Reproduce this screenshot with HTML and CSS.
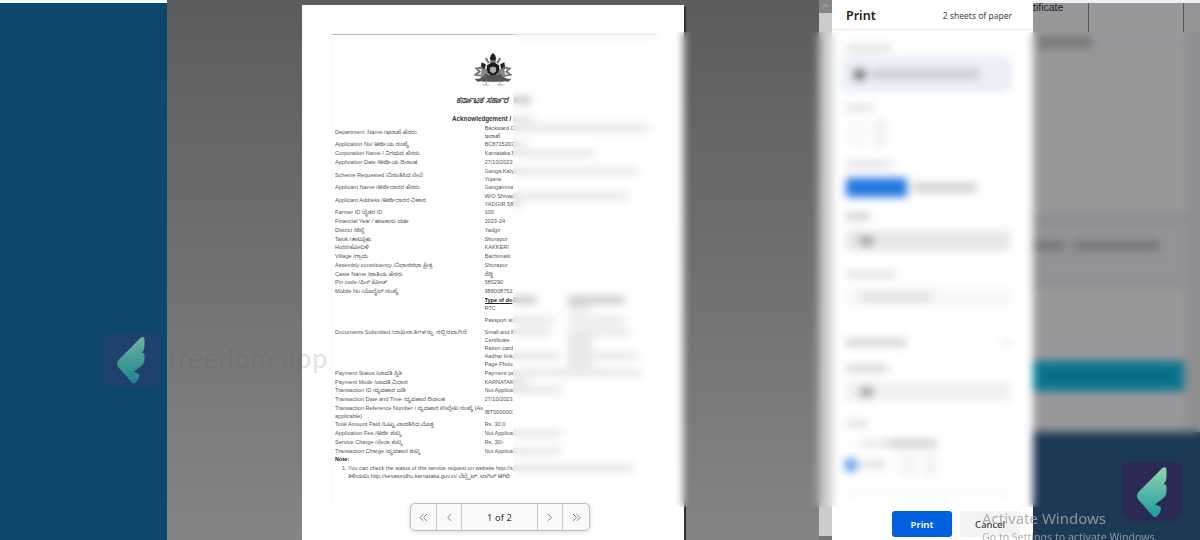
FILE: index.html
```html
<!DOCTYPE html>
<html lang="en">
<head>
<meta charset="utf-8">
<title>Print</title>
<link rel="stylesheet" href="styles.css">
</head>
<body>
<svg class="defs" width="0" height="0" aria-hidden="true">
  <defs>
    <linearGradient id="leaf" x1="0" y1="0" x2="0" y2="1"><stop offset="0" stop-color="#8fd6a8"/><stop offset="1" stop-color="#1f9aa2"/></linearGradient>
    <symbol id="wing" viewBox="0 0 60 60">
      <path fill="url(#leaf)" d="M41 5q4-2 4 3v7q0 4-3 7L27 35Q40 22 43 22q2 0 2 3v5q0 4-4 7l-8 6 5 2q2 1 1 4-1 4-4 6-2 2-4 0L16 38q-3-4 0-8z"/>
    </symbol>
  </defs>
</svg>
<div class="screen">
  <div class="side"></div>
  <main class="preview">
    <article class="sheet">
      <div class="paper">
        <svg class="emblem" viewBox="0 0 36 33">
          <path fill="#222" d="M16 2l2-2 2 2 1 3-1 4h-4l-1-4z"/>
          <path fill="#777" d="M16 7h4l2 6-4 2-4-2z"/>
          <path fill="#1b1b1b" d="M12 12l6-3 6 3v7l-6 4-6-4z"/>
          <path fill="#aaa" d="M15 14l3-1 3 1v4l-3 2-3-2z"/>
          <path fill="#222" d="M7 9l4 2-1 5-4-1zM29 9l-4 2 1 5 4-1z"/>
          <path fill="none" stroke="#777" stroke-width="2" d="M11 5l3 5M25 5l-3 5M8 14l-6 1 3 3-4 3 6 1 5-3M28 14l6 1-3 3 4 3-6 1-5-3"/>
          <path fill="#888" d="M7 15h5l1 6-7 3zM29 15h-5l-1 6 7 3z"/>
          <path fill="#555" d="M0 25q7 1 11-5l7 2 7-2q4 6 11 5l-3 3q-4-1-6 0H9q-2-1-6 0z"/>
          <path stroke="#aaa" fill="none" d="M8 31h6M22 31h6M12 27l-1 4M24 27l1 4"/>
        </svg>
        <div class="state"><span class="clip">ಕರ್ನಾಟಕ ಸರ್ಕಾರ</span><i class="bar dark" style="width:17px"></i></div>
        <div class="ack"><span class="clip">Acknowledgement / ಸ್ವೀ</span><i class="bar" style="width:20px"></i></div>
        <div class="fields">
          <div class="row two"><span>Department&nbsp; Name /<b class="k">ಇಲಾಖೆ ಹೆಸರು</b></span><div><p><em>Backward C</em><i class="bar" style="width:137px"></i></p><p><em>ಇಲಾಖೆ</em></p></div></div>
          <div class="row"><span>Application No/ <b class="k">ಅರ್ಜಿಯ ಸಂಖ್ಯೆ</b></span><div><p><em>BC8715203</em><i class="bar" style="width:12px"></i></p></div></div>
          <div class="row"><span>Corporation Name / <b class="k">ನಿಗಮದ ಹೆಸರು</b></span><div><p><em>Karnataka M</em><i class="bar" style="width:82px"></i></p></div></div>
          <div class="row"><span>Application Date /<b class="k">ಅರ್ಜಿಯ ದಿನಾಂಕ</b></span><div><p><em>27/10/2023</em></p></div></div>
          <div class="row two"><span>Scheme Requested /<b class="k">ವಿನಂತಿಸಿದ ಸೇವೆ</b></span><div><p><em>Ganga Kaly</em><i class="bar" style="width:124px"></i></p><p><em>Yojane</em></p></div></div>
          <div class="row"><span>Applicant Name /<b class="k">ಅರ್ಜಿದಾರರ ಹೆಸರು</b></span><div><p><em>Gangamma</em></p></div></div>
          <div class="row two"><span>Applicant Address /<b class="k">ಅರ್ಜಿದಾರರ ವಿಳಾಸ</b></span><div><p><em>W/O Shivap</em><i class="bar" style="width:115px"></i></p><p><em>YADGIR 58</em><i class="bar" style="width:8px"></i></p></div></div>
          <div class="row"><span>Farmer ID /<b class="k">ರೈತರ ID</b></span><div><p><em>100</em></p></div></div>
          <div class="row"><span>Financial Year / <b class="k">ಹಣಕಾಸು ವರ್ಷ</b></span><div><p><em>2023-24</em></p></div></div>
          <div class="row"><span>District /<b class="k">ಜಿಲ್ಲೆ</b></span><div><p><em>Yadgir</em></p></div></div>
          <div class="row"><span>Taluk /<b class="k">ತಾಲ್ಲೂಕು</b></span><div><p><em>Shorapur</em></p></div></div>
          <div class="row"><span>Hobli/<b class="k">ಹೋಬಳಿ</b></span><div><p><em>KAKKERI</em></p></div></div>
          <div class="row"><span>Village /<b class="k">ಗ್ರಾಮ</b></span><div><p><em>Bachimatti</em></p></div></div>
          <div class="row"><span>Assembly constituency /<b class="k">ವಿಧಾನಸಭಾ ಕ್ಷೇತ್ರ</b></span><div><p><em>Shorapur</em></p></div></div>
          <div class="row"><span>Caste Name /<b class="k">ಜಾತಿಯ ಹೆಸರು</b></span><div><p><em>ರೆಡ್ಡಿ</em></p></div></div>
          <div class="row"><span>Pin code /<b class="k">ಪಿನ್ ಕೋಡ್</b></span><div><p><em>585290</em></p></div></div>
          <div class="row"><span>Mobile No /<b class="k">ಮೊಬೈಲ್ ಸಂಖ್ಯೆ</b></span><div><p><em>9880087511</em></p></div></div>
          <div class="row docs"><span>Documents Submitted /<b class="k wide">ದಾಖಲಾತಿಗಳನ್ನು ಸಲ್ಲಿಸಲಾಗಿದೆ</b></span>
            <div>
              <p><em class="head">Type of do</em><i class="bar dark" style="width:24px"></i><i class="bar dark col" style="width:57px"></i></p>
              <p class="rtc"><em>RTC</em><i class="bar none" style="width:24px"></i><i class="bar col" style="width:22px"></i></p>
              <p><em>Passport siz</em><i class="bar" style="width:42px"></i><i class="bar col2" style="width:57px"></i></p>
              <p class="gap"><em>Small and M</em><i class="bar" style="width:38px"></i><i class="bar col3" style="width:62px"></i></p>
              <p><em>Certificate</em><i class="bar none" style="width:38px"></i><i class="bar col3" style="width:24px"></i></p>
              <p><em>Ration card</em><i class="bar none" style="width:38px"></i><i class="bar col3" style="width:24px"></i></p>
              <p><em>Aadhar linke</em><i class="bar" style="width:46px"></i><i class="bar col4" style="width:70px"></i></p>
              <p><em>Page Photo</em><i class="bar none" style="width:38px"></i><i class="bar col3" style="width:24px"></i></p>
            </div></div>
          <div class="row"><span>Payment Status /<b class="k">ಪಾವತಿ ಸ್ಥಿತಿ</b></span><div><p><em>Payment pai</em><i class="bar" style="width:128px"></i></p></div></div>
          <div class="row"><span>Payment Mode /<b class="k">ಪಾವತಿ ವಿಧಾನ</b></span><div><p><em>KARNATAK</em><i class="bar" style="width:14px"></i></p></div></div>
          <div class="row"><span>Transaction ID /<b class="k">ವ್ಯವಹಾರ ಐಡಿ</b></span><div><p><em>Not Applica</em><i class="bar" style="width:49px"></i></p></div></div>
          <div class="row"><span>Transaction Date and Time /<b class="k">ವ್ಯವಹಾರ ದಿನಾಂಕ</b></span><div><p><em>27/10/2023</em></p></div></div>
          <div class="row two"><span>Transaction Reference Number / <b class="k">ವ್ಯವಹಾರ ಉಲ್ಲೇಖ ಸಂಖ್ಯೆ</b> (As<br>applicable)</span><div><p><em>IBT0000001</em></p></div></div>
          <div class="row"><span>Total Amount Paid /<b class="k">ಒಟ್ಟು ಪಾವತಿಸಿದ ಮೊತ್ತ</b></span><div><p><em>Rs. 30.0</em></p></div></div>
          <div class="row"><span>Application Fee /<b class="k">ಅರ್ಜಿ ಶುಲ್ಕ</b></span><div><p><em>Not Applica</em><i class="bar" style="width:48px"></i></p></div></div>
          <div class="row"><span>Service Charge /<b class="k">ಸೇವಾ ಶುಲ್ಕ</b></span><div><p><em>Rs. 30/-</em></p></div></div>
          <div class="row"><span>Transaction Charge /<b class="k">ವ್ಯವಹಾರ ಶುಲ್ಕ</b></span><div><p><em>Not Applica</em><i class="bar" style="width:48px"></i></p></div></div>
        </div>
        <div class="note">Note:</div>
        <div class="item"><span>1. You can check the status of this service request on website http://sevas</span><i class="bar" style="width:120px"></i></div>
        <div class="item second"><span><b class="k">ತಿಳಿಯಲು</b> http://sevasindhu.karnataka.gov.in/ <b class="k">ವೆಬ್ಸೈಟ್, ಲಾಗಿನ್ ಆಗಿರಿ</b></span></div>
      </div>
    </article>
    <nav class="pager">
      <span><svg viewBox="0 0 10 10"><path d="M5 1L1 5l4 4M9 1L5 5l4 4"/></svg></span>
      <span><svg viewBox="0 0 10 10"><path d="M7 1L3 5l4 4"/></svg></span>
      <span class="count">1 of 2</span>
      <span><svg viewBox="0 0 10 10"><path d="M3 1l4 4-4 4"/></svg></span>
      <span><svg viewBox="0 0 10 10"><path d="M1 1l4 4-4 4M5 1l4 4-4 4"/></svg></span>
    </nav>
  </main>
  <div class="scroll"><svg viewBox="0 0 13 13"><path d="M4 7l2.500-2.500L9 7"/></svg></div>
  <aside class="print">
    <header><h1>Print</h1><span>2 sheets of paper</span></header>
    <div class="options">
      <i class="lbl l1"></i>
      <div class="field focus"><i class="dot"></i><i class="val" style="width:110px"></i></div>
      <i class="lbl l2"></i>
      <div class="copies"></div>
      <i class="lbl l3"></i>
      <div class="orient"><i class="on"></i><i class="off"></i></div>
      <i class="lbl l4"></i>
      <div class="field grey"><i class="val short"></i></div>
      <i class="lbl l5"></i>
      <div class="field pale"><i class="val" style="width:72px"></i></div>
      <div class="more"><i class="lbl l6"></i><i class="chev"></i></div>
      <i class="lbl l7"></i>
      <div class="field mid"><i class="val short"></i></div>
      <i class="lbl l8"></i>
      <div class="radio"><i class="ring"></i><i class="txt long"></i></div>
      <div class="radio"><i class="ring sel"></i><i class="txt"></i><i class="num"></i></div>
      <i class="rule"></i>
    </div>
    <footer><button class="primary">Print</button><button>Cancel</button></footer>
  </aside>
  <section class="site">
    <div class="cells"><span>tificate</span><span></span><span></span></div>
    <div class="content">
      <i class="title"></i>
      <div class="box"><i></i><i></i></div>
      <div class="cta"><i></i></div>
    </div>
    <div class="bottom"></div>
  </section>
  <div class="frost"></div>
  <div class="brand"><svg><use href="#wing"/></svg></div>
  <div class="brandname">freedom app</div>
  <div class="brand corner"><svg><use href="#wing"/></svg></div>
  <div class="activate"><strong>Activate Windows</strong><span>Go to Settings to activate Windows.</span></div>
</div>
</body>
</html>
```
FILE: styles.css
```css
* { box-sizing: border-box; }
body { margin: 0; overflow: hidden; font-family: "Noto Sans", "Open Sans", sans-serif; }
i, em { font-style: normal; }
p { margin: 0; }
.defs { position: absolute; }
.screen { position: relative; display: flex; width: 1200px; height: 540px; overflow: hidden; background: #fff; }
.side { width: 167px; border-top: 3px solid #f4fbff; background: #0d476b; }
.preview { position: relative; width: 652px; padding: 5px 0 0 135px; background: linear-gradient(#5c5c5e, #858585); }

/* paper sheet */
.sheet { width: 382px; height: 540px; padding: 29px 27px 0 29px; background: #fff; box-shadow: 2px 2px 1px #333; }
.paper { height: 475px; border-top: 1px solid #bbb; border-left: 1px solid #fafafa; border-right: 1px solid #fafafa; padding-left: 3px; font: 5.6px/8px "Liberation Sans", "Noto Sans Kannada", sans-serif; color: #555; }
.emblem { display: block; width: 38px; height: 34px; margin: 18px 0 0 139px; }
.state { display: flex; align-items: center; height: 14px; margin: 6px 0 0 121px; font: italic bold 9.6px/14px "Liberation Sans", sans-serif; color: #444; }
.state .clip { width: 58px; }
.ack { display: flex; align-items: center; height: 9px; margin: 7px 0 0 117px; font-size: 6.3px; font-weight: bold; color: #333; }
.ack .clip { width: 61px; }
.clip { overflow: hidden; white-space: nowrap; }
.fields { margin-top: .7px; }
.row { display: grid; grid-template-columns: 149.5px 1fr; align-items: center; height: 8.77px; white-space: nowrap; }
.row.two { height: 16.4px; }
.row.docs { height: 73px; }
.row p { display: flex; align-items: center; height: 8px; }
.row em { width: 28.5px; overflow: hidden; }
.row .head { font-weight: bold; text-decoration: underline; color: #222; }
.k { font-weight: normal; }
.k.wide { letter-spacing: .65px; }
.rtc + p { margin: 4px 0; }
.bar { flex: none; height: 6px; background: #e0e0e0; }
.bar.dark { background: #b8b8b8; }
.bar.none { background: transparent; }
.col { margin-left: 31px; }
.col2 { margin-left: 13px; }
.col3 { margin-left: 17px; }
.col4 { margin-left: 9px; }
.note { height: 9px; font-weight: bold; color: #222; }
.item { display: flex; align-items: center; height: 8px; padding-left: 7px; white-space: nowrap; }
.item span { width: 171px; overflow: hidden; }
.item.second { padding-left: 13px; }
.item.second span { width: 165px; }

.pager { position: absolute; z-index: 3; left: 243px; top: 503px; display: flex; width: 180px; height: 28px; border: 1px solid #bbb; border-radius: 5px; background: #fafafb; box-shadow: 0 1px 6px #ddd; }
.pager span { display: flex; align-items: center; justify-content: center; width: 26px; border-right: 1px solid #c4c4c4; }
.pager span:last-child { border: 0; }
.pager .count { width: 76px; font-size: 9.5px; color: #333; }
.pager svg { width: 9px; height: 9px; fill: none; stroke: #777; }

.scroll { width: 13px; background: #ccc; border-bottom: 4px solid #777; }
.scroll svg { display: block; width: 13px; height: 13px; background: #858585; fill: none; stroke: #bbb; }

/* print panel */
.print { display: flex; flex-direction: column; width: 201px; background: #fff; }
.print header { display: flex; align-items: center; justify-content: space-between; height: 30px; padding: 1px 21px 0 14px; border-bottom: 1px solid #eee; font-size: 8.5px; color: #444; }
.print h1 { margin: 0; font-size: 12.5px; font-weight: 600; color: #222; }
.options { display: flex; flex-direction: column; height: 473px; padding: 15px 23px 0 14px; }
.lbl { display: block; flex: none; height: 7px; background: #e0e0e0; }
.l1 { width: 46px; }
.l2 { width: 27px; margin-top: 14px; }
.l3 { width: 46px; margin-top: 14px; }
.l4 { width: 24px; margin-top: 16px; background: #ccc; }
.l5 { width: 50px; margin-top: 20px; }
.l6 { width: 60px; background: #ccc; }
.l7 { width: 42px; margin-top: 18px; background: #d4d4d4; }
.l8 { width: 22px; margin-top: 19px; }
.field { display: flex; align-items: center; flex: none; height: 20px; margin-top: 11px; padding-left: 14px; background: #e6e6e6; }
.field.focus { height: 32px; margin: 6px 0 0 -3px; padding-left: 9px; gap: 5px; border: 2px solid #ccdaf1; border-radius: 4px; background: #edf0f6; }
.dot { width: 11px; height: 11px; border-radius: 50%; background: #555; }
.val { height: 8px; background: #c4c6ca; }
.val.short { width: 13px; background: #999; }
.field.pale { height: 20px; margin-top: 9px; background: #f8f8f8; }
.field.pale .val { background: #ddd; }
.field.mid { height: 19px; margin-top: 10px; background: #f0f0f0; }
.copies { flex: none; width: 39px; height: 28px; margin-top: 8px; background: linear-gradient(90deg, #fafafa 60%, #fff 60% 75%, #eee 75%); }
.orient { display: flex; align-items: center; flex: none; gap: 6px; height: 20px; margin-top: 9px; }
.on { width: 61px; height: 19px; background: #2376e0; }
.off { width: 64px; height: 9px; background: #ccc; }
.more { display: flex; align-items: center; justify-content: space-between; flex: none; height: 10px; margin-top: 30px; }
.chev { width: 7px; height: 5px; background: #e4e4e4; }
.radio { display: flex; align-items: center; flex: none; gap: 4px; height: 15px; margin-top: 9px; }
.radio + .radio { margin-top: 6px; }
.ring { width: 11px; height: 11px; border: 1px solid #f0f0f0; border-radius: 50%; }
.ring.sel { width: 14px; height: 14px; margin-left: -2px; border: 0; background: #5a9fe8; }
.txt { width: 24px; height: 7px; background: #ddd; }
.txt.long { width: 76px; background: linear-gradient(90deg, #e6e6e6 35%, #c8c8c8 35%); }
.num { width: 38px; height: 24px; margin-left: 8px; background: linear-gradient(90deg, #f6f6f6 60%, #fff 60% 75%, #f0f0f0 75%); }
.rule { flex: none; height: 2px; margin-top: 21px; background: #eee; }
.print footer { display: flex; gap: 8px; padding: 8px 0 0 60px; }
.print button { width: 60px; height: 26px; padding: 0; border: 0; border-radius: 3px; background: #f3f3f3; font: 9.6px "Noto Sans", sans-serif; color: #222; }
.print .primary { background: #0060df; color: #fff; font-weight: 600; }

/* page behind the dialog */
.site { display: flex; flex-direction: column; width: 167px; border-top: 3px solid #f0f2fa; background: #98989b; }
.cells { display: grid; grid-template-columns: 56px 95px 1fr; height: 29px; font: 10.5px/9px "Liberation Sans", sans-serif; color: #222; }
.cells span { border-right: 1px solid #555; }
.cells span:last-child { border: 0; background: #939396; }
.content { height: 400px; border-right: 14px solid #8e8e91; padding-top: 5px; }
.title { display: block; width: 55px; height: 11px; margin-left: 4px; background: #79797c; }
.box { display: flex; align-items: center; gap: 10px; height: 70px; margin-top: 168px; padding: 0 23px 14px 0; border: solid #87878a; border-width: 5px 0 2px; background: #939397; }
.box i { width: 31px; height: 9px; background: #747478; }
.box i + i { width: 85px; }
.cta { display: flex; align-items: center; height: 30px; margin: 75px 2px 0 0; padding-left: 13px; background: #0a7690; }
.cta i { width: 125px; height: 10px; background: #086780; }
.bottom { flex: 1; background: #1d3a54; }

.frost { position: absolute; z-index: 2; left: 513px; top: 32px; width: 687px; height: 475px; backdrop-filter: blur(4.5px); }

/* watermarks */
.brand { position: absolute; z-index: 4; left: 103px; top: 333px; display: grid; place-items: center; width: 56px; height: 54px; border-radius: 9px; background: #24416d; opacity: .75; }
.brand svg { width: 54px; height: 54px; }
.brand.corner { left: 1122px; top: 462px; width: 60px; height: 59px; background: #2b2a55; opacity: 1; }
.brand.corner svg { width: 58px; height: 58px; }
.brandname { position: absolute; z-index: 4; left: 168px; top: 342px; font: 27px/32px Lato, sans-serif; letter-spacing: .9px; color: rgba(95, 95, 100, .2); white-space: nowrap; }
.activate { position: absolute; z-index: 5; left: 982px; top: 508px; display: flex; flex-direction: column; color: rgba(160, 163, 168, .85); white-space: nowrap; }
.activate strong { font-size: 15px; line-height: 20px; font-weight: 400; }
.activate span { font-size: 10.6px; line-height: 18px; }
```
